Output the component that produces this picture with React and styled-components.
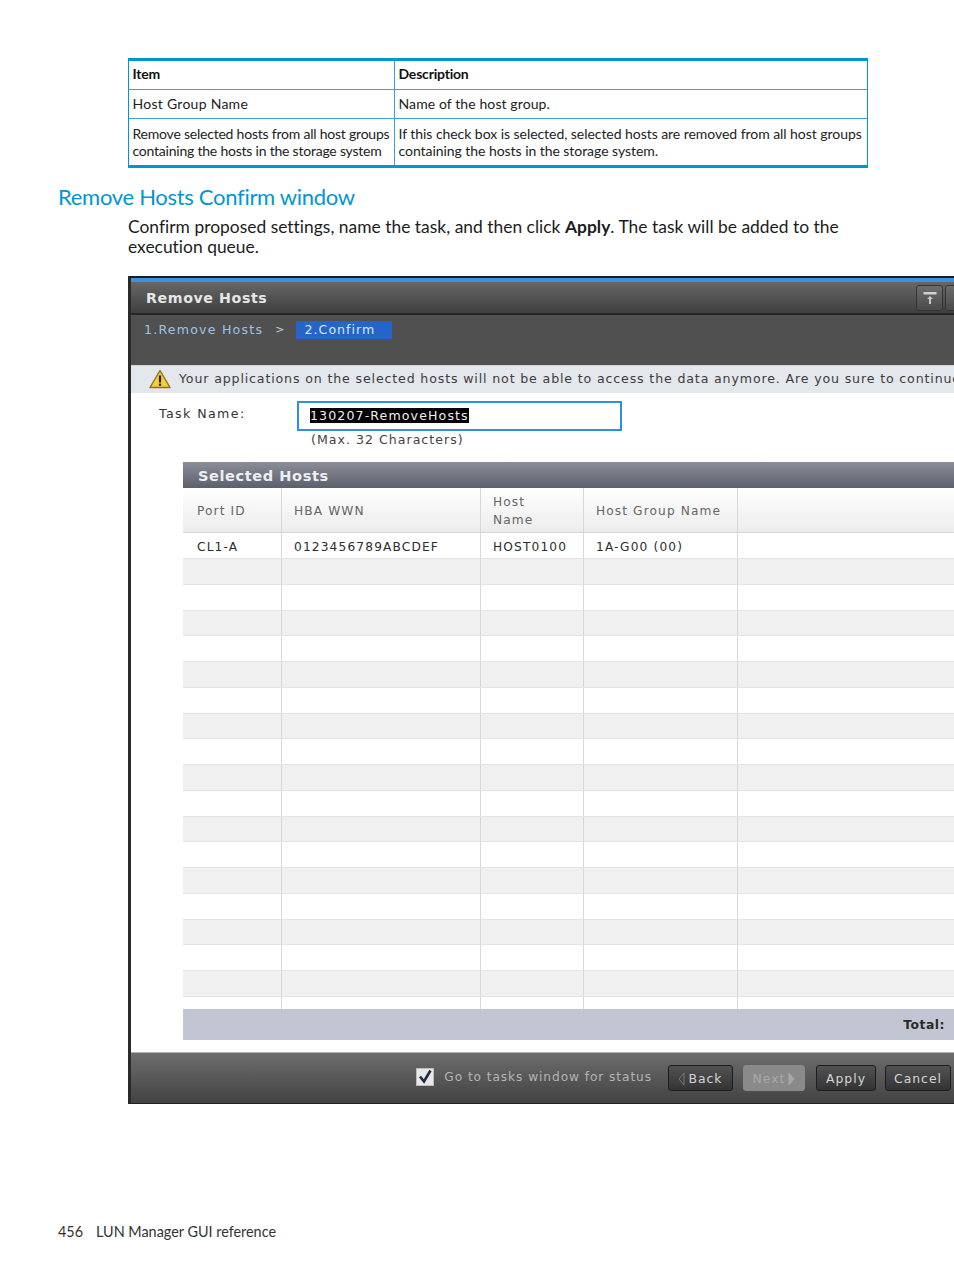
import React from "react";
import styled, { createGlobalStyle } from "styled-components";

const Global = createGlobalStyle`
  html, body { margin: 0; padding: 0; background: #fff; }
  body { width: 954px; height: 1271px; overflow: hidden; font-family: "Lato", "Liberation Sans", sans-serif; color: #1c1c1c; font-variant-ligatures: none; }
  * { box-sizing: border-box; }
`;
const Page = styled.div`
  width: 954px; height: 1271px; padding-top: 58px; display: flex; flex-direction: column; overflow: hidden;
`;
const DocTable = styled.div`
  margin-left: 128px; width: 740px; height: 110px;
  border-top: 3px solid #0096d6; border-bottom: 3px solid #0096d6;
  border-left: 1.5px solid #0096d6; border-right: 1.5px solid #0096d6;
  display: grid; grid-template-columns: 266px 1fr; grid-template-rows: 29px 29px 1fr;
`;
const DocCell = styled.div`
  padding: ${p => (p.$tall ? "6px 3px 0 3.5px" : p.$head ? "0 3px 4px 3.5px" : "0 3px 2px 3.5px")};
  display: ${p => (p.$tall ? "block" : "flex")}; align-items: center;
  font-size: 14px; line-height: 17px;
  font-weight: ${p => (p.$head ? 700 : 400)}; letter-spacing: ${p => p.$sp ?? -0.2}px;
  white-space: nowrap; color: ${p => (p.$head ? "#111" : "#222")};
  border-right: ${p => (p.$first ? "1.5px solid #33a5dc" : "0")};
  border-bottom: ${p => (p.$last ? "0" : "1.5px solid #33a5dc")};
`;
const Heading = styled.h2`
  margin: 14px 0 0 58px; height: 30px; font-size: 22px; line-height: 30px; font-weight: 400;
  color: #0096d6; letter-spacing: -0.3px;
`;
const Para = styled.p`
  margin: 5px 0 0 128px; width: 740px; font-size: 17.4px; line-height: 20px; letter-spacing: 0.02px; color: #1c1c1c;
  b { font-weight: 700; }
`;
const Dialog = styled.section`
  margin: 19px 0 0 128px; width: 826px; height: 828px; flex: none; display: flex; flex-direction: column;
  background: #fff; border-left: 3px solid #2a2a2a; border-top: 2px solid #1d1d1d; border-bottom: 1px solid #222;
  font-family: "DejaVu Sans", sans-serif; overflow: hidden;
`;
const BlueLine = styled.div`height: 4px; flex: none; background: #3a92e0;`;
const TitleBar = styled.div`
  flex: none; height: 33px; padding: 1px 0 0 15px; display: flex; align-items: center; justify-content: space-between;
  background: linear-gradient(#676767, #3f3f3f); border-bottom: 2px solid #262626;
  color: #e6e6e6; font-size: 14.2px; font-weight: 700; letter-spacing: 0.6px;
`;
const TitleTools = styled.div`display: flex; gap: 2px; margin-right: -18px;`;
const ToolButton = styled.div`
  width: 27px; height: 26px; border-radius: 3px; border: 1px solid #353535; background: linear-gradient(#6c6c6c, #4a4a4a);
  display: flex; align-items: center; justify-content: center;
`;
const Steps = styled.div`
  flex: none; height: 50px; background: #505050; padding: 6px 0 0 13px; display: flex; align-items: flex-start;
  font-size: 12.6px; letter-spacing: 1.2px; line-height: 18px;
`;
const StepOld = styled.span`color: #9dc3e2;`;
const StepSep = styled.span`color: #bcd0e2; margin: 0 10px 0 12px; font-size: 11px;`;
const StepNow = styled.span`width: 96px; height: 18px; padding-left: 9px; background: #2565c8; color: #d8e6f8; letter-spacing: 1px;`;
const Warning = styled.div`
  flex: none; height: 28px; padding: 0 0 2px 18px; display: flex; align-items: center; gap: 8px; white-space: nowrap;
  background: #e4e7ec; color: #3c3c3c; font-size: 12.6px; letter-spacing: 0.85px; border-top: 1px solid #d3d6da;
  svg { flex: none; }
`;
const Content = styled.div`
  flex: 1; min-height: 0; padding-top: 8px; display: flex; flex-direction: column;
`;
const TaskRow = styled.div`display: flex; height: 30px; padding-left: 28px; align-items: center;`;
const TaskLabel = styled.label`width: 138px; font-size: 12.6px; letter-spacing: 1.4px; color: #333; margin-top: -5px; white-space: nowrap;`;
const TaskInput = styled.div`
  width: 325px; height: 30px; border: 2px solid #2f8fe3; padding: 0 0 2px 11px; display: flex; align-items: center; background: #fff;
`;
const Selected = styled.span`
  background: #000; color: #eee; font-size: 12.6px; letter-spacing: 1.1px; line-height: 15px; height: 15px; white-space: nowrap;
`;
const Hint = styled.div`
  margin: 0 0 0 180px; height: 17px; font-size: 12.6px; letter-spacing: 1px; line-height: 17px; color: #444;
`;
const Panel = styled.div`margin: 14px 0 0 52px; display: flex; flex-direction: column; flex: none;`;
const PanelHead = styled.div`
  height: 26px; padding-left: 15px; display: flex; align-items: center;
  background: linear-gradient(#8b8e99, #5d606c); color: #eceef2; font-size: 14.6px; font-weight: 700; letter-spacing: 0.55px;
`;
const columns = "99px 199px 103px 154px 1fr";
const HeadRow = styled.div`
  display: grid; grid-template-columns: ${columns}; height: 45px;
  background: linear-gradient(#fff, #ececec); border-bottom: 1.5px solid #d8d8d8;
`;
const HeadCell = styled.div`
  padding: 2px 0 0 ${p => (p.$lead ? 14 : 12)}px; display: flex; align-items: center; font-size: 12.2px; letter-spacing: 1.1px; line-height: 18px; color: #666;
  border-right: ${p => (p.$end ? "0" : "1.5px solid #d8d8d8")};
`;
const Row = styled.div`
  display: grid; grid-template-columns: ${columns}; height: ${p => p.$h}px;
  background: ${p => (p.$alt ? "#f0f0f0" : "#fff")}; border-bottom: ${p => (p.$open ? "0" : "1.5px solid #e3e3e3")};
`;
const Cell = styled.div`
  padding: 2px 0 0 ${p => (p.$lead ? 14 : 12)}px; display: flex; align-items: center; font-size: 12.2px; letter-spacing: 1.15px; color: #2c2c2c; white-space: nowrap;
  border-right: ${p => (p.$end ? "0" : "1.5px solid #d8d8d8")};
`;
const TotalBar = styled.div`
  height: 31px; padding-right: 9px; display: flex; align-items: center; justify-content: flex-end;
  background: #c1c6d2; color: #2a2a2a; font-size: 12.4px; font-weight: 700; letter-spacing: 0.5px;
`;
const Footer = styled.div`
  flex: none; height: 51px; padding: 0 1px 0 0; display: flex; align-items: center; justify-content: flex-end;
  background: linear-gradient(#6d6d6d, #424242); border-top: 1px solid #b5b5b5;
`;
const Check = styled.div`display: flex; align-items: center; gap: 10px; margin-right: 16px; margin-top: -3px;`;
const CheckText = styled.span`color: #b4b4b4; font-size: 12.2px; letter-spacing: 0.92px; white-space: nowrap;`;
const Btn = styled.div`
  width: ${p => p.$w}px; height: 26px; margin-right: ${p => p.$mr}px; padding-top: 1px; border-radius: 3px; display: flex; align-items: center; justify-content: center; gap: 3px;
  font-size: 12.4px; letter-spacing: 1px;
  background: ${p => (p.$off ? "#8a8a8a" : "linear-gradient(#525252, #333)")};
  border: 1px solid ${p => (p.$off ? "#8a8a8a" : "#1e1e1e")};
  color: ${p => (p.$off ? "#a8a8a8" : "#d5d5d5")};
`;
const PageFoot = styled.footer`
  margin: 119px 0 0 58px; font-size: 14.4px; line-height: 18px; color: #333; display: flex; gap: 13px;
`;

const Warn = () => (
  <svg width="22" height="20" viewBox="0 0 22 20">
    <path d="M11 1.5 L21 18.5 H1 Z" fill="#f4cf3a" stroke="#8c7420" strokeWidth="1.4" strokeLinejoin="round" />
    <rect x="9.9" y="6.5" width="2.2" height="7" fill="#222" />
    <rect x="9.9" y="14.6" width="2.2" height="2.2" fill="#222" />
  </svg>
);
const Pin = () => (
  <svg width="16" height="16" viewBox="0 0 16 16">
    <rect x="1.5" y="2" width="13" height="2.5" fill="#d0d0d0" />
    <path d="M8 6 L11 9 H9 V14 H7 V9 H5 Z" fill="#c8c8c8" />
  </svg>
);
const CheckBox = () => (
  <svg width="18" height="18" viewBox="0 0 18 18">
    <rect x="0.5" y="0.5" width="17" height="17" fill="#e8e8e8" stroke="#bcbcbc" />
    <path d="M4 8.5 L8 13.5 L14.5 2.5" fill="none" stroke="#1f2c44" strokeWidth="2.6" />
  </svg>
);
const Arrow = ({ left, color, outline }) => (
  <svg width="7" height="14" viewBox="0 0 7 14">
    <path d={left ? "M6 1 L1 7 L6 13 Z" : "M1 1 L6 7 L1 13 Z"} fill={outline ? "none" : color} stroke={color} strokeWidth="1" />
  </svg>
);

const rowHeights = Array.from({ length: 17 }, (_, i) => Math.round((i + 1) * 25.76) - Math.round(i * 25.76));

export default function App() {
  return (
    <Page>
      <Global />
      <DocTable>
        <DocCell $head $first>Item</DocCell>
        <DocCell $head>Description</DocCell>
        <DocCell $first $sp={0.27}>Host Group Name</DocCell>
        <DocCell $sp={0.1}>Name of the host group.</DocCell>
        <DocCell $first $last $tall $sp={-0.22}>Remove selected hosts from all host groups<br />containing the hosts in the storage system</DocCell>
        <DocCell $last $tall $sp={-0.05}>If this check box is selected, selected hosts are removed from all host groups<br />containing the hosts in the storage system.</DocCell>
      </DocTable>
      <Heading>Remove Hosts Confirm window</Heading>
      <Para>Confirm proposed settings, name the task, and then click <b>Apply</b>. The task will be added to the execution queue.</Para>
      <Dialog>
        <BlueLine />
        <TitleBar>
          <span>Remove Hosts</span>
          <TitleTools><ToolButton><Pin /></ToolButton><ToolButton /></TitleTools>
        </TitleBar>
        <Steps>
          <StepOld>1.Remove Hosts</StepOld>
          <StepSep>&gt;</StepSep>
          <StepNow>2.Confirm</StepNow>
        </Steps>
        <Warning><Warn /><span>Your applications on the selected hosts will not be able to access the data anymore. Are you sure to continue?</span></Warning>
        <Content>
          <TaskRow>
            <TaskLabel>Task Name:</TaskLabel>
            <TaskInput><Selected>130207-RemoveHosts</Selected></TaskInput>
          </TaskRow>
          <Hint>(Max. 32 Characters)</Hint>
          <Panel>
            <PanelHead>Selected Hosts</PanelHead>
            <HeadRow>
              <HeadCell $lead>Port ID</HeadCell>
              <HeadCell>HBA WWN</HeadCell>
              <HeadCell>Host<br />Name</HeadCell>
              <HeadCell>Host Group Name</HeadCell>
              <HeadCell $end />
            </HeadRow>
            <Row $h={26}>
              <Cell $lead>CL1-A</Cell><Cell>0123456789ABCDEF</Cell><Cell>HOST0100</Cell><Cell>1A-G00 (00)</Cell><Cell $end />
            </Row>
            {rowHeights.map((h, i) => (
              <Row key={i} $h={h} $alt={i % 2 === 0}><Cell /><Cell /><Cell /><Cell /><Cell $end /></Row>
            ))}
            <Row $h={12} $open><Cell /><Cell /><Cell /><Cell /><Cell $end /></Row>
            <TotalBar>Total:</TotalBar>
          </Panel>
        </Content>
        <Footer>
          <Check><CheckBox /><CheckText>Go to tasks window for status</CheckText></Check>
          <Btn $w={65} $mr={10}><Arrow left color="#777" outline />Back</Btn>
          <Btn $w={62} $mr={11} $off>Next<Arrow color="#a8a8a8" /></Btn>
          <Btn $w={60} $mr={9}>Apply</Btn>
          <Btn $w={66} $mr={2}>Cancel</Btn>
        </Footer>
      </Dialog>
      <PageFoot><span>456</span><span>LUN Manager GUI reference</span></PageFoot>
    </Page>
  );
}
